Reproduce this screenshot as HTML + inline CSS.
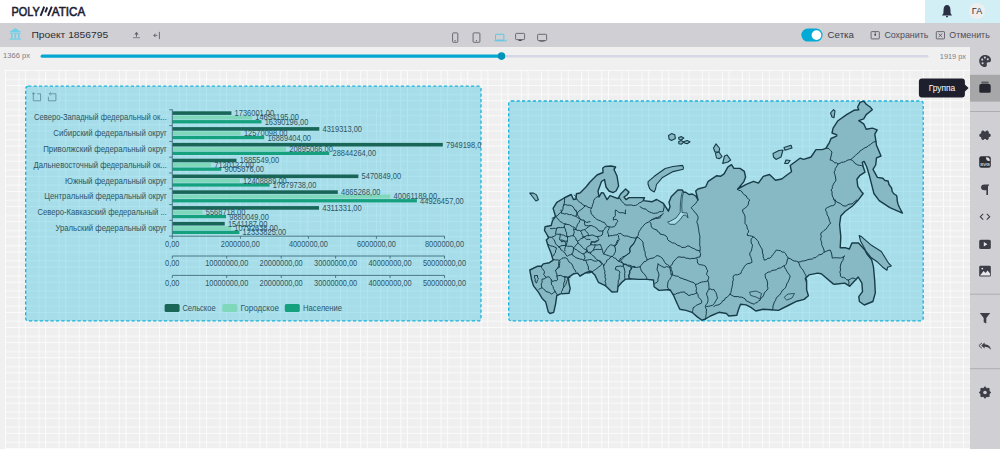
<!DOCTYPE html>
<html><head><meta charset="utf-8">
<style>
*{margin:0;padding:0}
html,body{width:1000px;height:449px;overflow:hidden;background:#f0f0f0}
svg{display:block;font-family:"Liberation Sans",sans-serif}
</style></head><body>
<svg width="1000" height="449" viewBox="0 0 1000 449">
<defs>
<pattern id="grid" patternUnits="userSpaceOnUse" x="5" y="70" width="20.1" height="15.12">
<rect x="0" y="0" width="20.1" height="15.12" fill="#efeff0"/>
<rect x="0" y="0" width="1" height="15.12" fill="#fbfbfb"/>
<rect x="13.4" y="0" width="1" height="15.12" fill="#fbfbfb"/>
<rect x="0" y="0" width="20.1" height="1" fill="#fbfbfb"/>
<rect x="0" y="8.9" width="20.1" height="1" fill="#fbfbfb"/>
</pattern>
<clipPath id="cp"><rect x="25.7" y="86.2" width="455.3" height="234.7"/></clipPath>
</defs>

<rect x="0" y="47" width="970" height="402" fill="#f0f0f0"/>
<rect x="5" y="70" width="965" height="379" fill="url(#grid)"/>
<rect x="0" y="0" width="1000" height="23" fill="#ffffff"/>
<rect x="925" y="0" width="75" height="23" fill="#d3eff6"/>
<g fill="#1c2133" stroke="#1c2133" stroke-width="0.6" font-size="13.2">
<text x="11.6" y="15.8" textLength="28.2" lengthAdjust="spacingAndGlyphs">POLY</text>
<text x="51.8" y="15.8" textLength="33.4" lengthAdjust="spacingAndGlyphs">ATICA</text>
</g>
<g stroke="#1c2133" stroke-width="1.9" stroke-linecap="butt">
<line x1="40.6" y1="15.8" x2="44.2" y2="6.6"/>
<line x1="45.3" y1="12.4" x2="47.2" y2="7.4"/>
<line x1="48" y1="15.8" x2="51.8" y2="6.6"/>
</g>
<path d="M942,15.5 L943.4,13.2 L943.6,9.2 Q943.8,5.2 947,5 Q950.2,5.2 950.4,9.2 L950.6,13.2 L952,15.5 Z" fill="#2b3044"/>
<rect x="946" y="15.8" width="2" height="1.6" rx="0.8" fill="#2b3044"/>
<circle cx="977" cy="11" r="8" fill="#eeeeee"/>
<text x="977" y="14.3" font-size="9" fill="#2f3242" text-anchor="middle">ГА</text>
<rect x="0" y="23" width="1000" height="24" fill="#d0cfd4"/>
<g fill="#6fd0e8">
<path d="M9.3,32 L15.3,28 L21.2,32 Z"/>
<rect x="10" y="32.6" width="10.6" height="1.2"/>
<rect x="11" y="34" width="1.6" height="4.2"/><rect x="14.5" y="34" width="1.6" height="4.2"/><rect x="18" y="34" width="1.6" height="4.2"/>
<rect x="9.6" y="38.4" width="11.3" height="1.3"/>
</g>
<text x="31.4" y="38.0" font-size="9.8" fill="#2c2d38" textLength="76.8" lengthAdjust="spacingAndGlyphs">Проект 1856795</text>
<g fill="#64656e"><path d="M136.5,31.8 L134.3,34.4 L136.0,34.4 L136.0,36.8 L137.0,36.8 L137.0,34.4 L138.7,34.4 Z"/><rect x="133" y="37.4" width="7" height="0.75"/></g>
<g stroke="#5e5f68" stroke-width="0.9" fill="none"><path d="M157.3,35.4 L153.8,35.4 M155.6,33.6 L153.8,35.4 L155.6,37.2"/><line x1="159.4" y1="31.9" x2="159.4" y2="39.1"/></g>
<g stroke="#5e5f68" stroke-width="0.9" fill="none">
<rect x="452.6" y="32.9" width="5.2" height="9.4" rx="0.8"/>
<rect x="473.1" y="32.9" width="6.8" height="9.4" rx="0.8"/>
<rect x="515.6" y="33.4" width="9" height="6.2" rx="0.8"/>
<rect x="537.6" y="34.3" width="9" height="6.2" rx="0.8"/>
</g>
<rect x="454.3" y="40.4" width="1.6" height="0.8" fill="#5e5f68"/>
<circle cx="476.5" cy="40.6" r="0.6" fill="#5e5f68"/>
<rect x="518.5" y="39.8" width="3.2" height="1.2" fill="#4a4b55"/>
<rect x="539.5" y="40.6" width="5" height="1.2" fill="#6e6f78"/>
<g stroke="#4fc6e6" stroke-width="0.9" fill="none"><rect x="495.5" y="34.3" width="8.4" height="5.8" rx="0.6"/><path d="M494.5,40.8 L504.5,40.8"/><path d="M504.5,40.6 L505.5,41.4 L507,39.6"/></g>
<rect x="801.3" y="28.6" width="21.3" height="13" rx="6.5" fill="#04aad6"/>
<circle cx="816.5" cy="35.1" r="4.9" fill="#ffffff"/>
<text x="827.6" y="38.1" font-size="9.9" fill="#3b3c4a" textLength="26.4" lengthAdjust="spacingAndGlyphs">Сетка</text>
<g stroke="#5e5f68" stroke-width="0.9" fill="none"><rect x="871.1" y="31.6" width="8.2" height="7.3" rx="0.6"/></g>
<circle cx="875.2" cy="34.8" r="0.9" fill="#2e2f38"/><rect x="874.8" y="31.6" width="0.8" height="3" fill="#5e5f68"/>
<text x="884.4" y="38.2" font-size="9.2" fill="#4d4e5b" textLength="43.9" lengthAdjust="spacingAndGlyphs">Сохранить</text>
<g stroke="#5e5f68" stroke-width="0.9" fill="none"><rect x="936.3" y="31.6" width="8.2" height="7.3" rx="0.6"/><path d="M938.6,33.6 L942.2,37 M942.2,33.6 L938.6,37"/></g>
<text x="949.3" y="38.2" font-size="9.2" fill="#4d4e5b" textLength="40.5" lengthAdjust="spacingAndGlyphs">Отменить</text>
<text x="3" y="58" font-size="7.7" fill="#7c7c86" textLength="27" lengthAdjust="spacingAndGlyphs">1366 px</text>
<text x="939.8" y="58.6" font-size="7.6" fill="#7c7c86" textLength="26.2" lengthAdjust="spacingAndGlyphs">1919 px</text>
<rect x="501" y="55" width="427.5" height="2.4" rx="1.2" fill="#d5d7e5"/>
<rect x="40.6" y="54.6" width="461" height="3.2" rx="1.6" fill="#04a6d2"/>
<circle cx="501.5" cy="56.1" r="3.8" fill="#0394b8"/>
<rect x="970" y="47" width="30" height="402" fill="#d0cfd4"/>
<rect x="970" y="74.8" width="30" height="26.8" fill="#a7a7aa"/>
<rect x="970" y="111.0" width="30" height="1" fill="#aeaeb2"/>
<rect x="970" y="293.7" width="30" height="1" fill="#aeaeb2"/>
<rect x="970" y="368.2" width="30" height="1" fill="#aeaeb2"/>
<rect x="25.7" y="86.2" width="455.3" height="234.7" rx="2.5" fill="rgba(0,178,216,0.3)" stroke="#19b1d9" stroke-width="1.3" stroke-dasharray="3.2 2.2"/>
<rect x="508.7" y="101.0" width="414.50000000000006" height="219.89999999999998" rx="2.5" fill="rgba(0,178,216,0.3)" stroke="#19b1d9" stroke-width="1.3" stroke-dasharray="3.2 2.2"/>
<g stroke="#5f8e9c" stroke-width="0.9" fill="none">
<path d="M33.3,92.3 L33.3,100.8 L40.6,100.8 L40.6,93.8 L37.2,93.8 M32.1,93.7 L35.2,93.7"/>
<path d="M55.9,93.8 L55.9,100.8 L48.4,100.8 L48.4,96.8 M55.9,93.8 L49.6,93.8 M50.8,92.3 L49.2,93.8 L50.8,95.5"/>
</g>
<g clip-path="url(#cp)">
<g stroke="#b4e4ee" stroke-width="0.8">
<line x1="240.4" y1="109.8" x2="240.4" y2="236.2"/>
<line x1="308.4" y1="109.8" x2="308.4" y2="236.2"/>
<line x1="376.4" y1="109.8" x2="376.4" y2="236.2"/>
<line x1="444.5" y1="109.8" x2="444.5" y2="236.2"/>
<line x1="226.7" y1="109.8" x2="226.7" y2="236.2"/>
<line x1="281.2" y1="109.8" x2="281.2" y2="236.2"/>
<line x1="335.6" y1="109.8" x2="335.6" y2="236.2"/>
<line x1="390.1" y1="109.8" x2="390.1" y2="236.2"/>
</g>
<rect x="172.3" y="111.30" width="59.1" height="3.6" fill="#196658"/>
<rect x="172.3" y="115.60" width="79.8" height="3.8" fill="#80d8ba"/>
<rect x="172.3" y="120.10" width="89.2" height="3.3" fill="#16a17e"/>
<text x="33.9" y="120.4" font-size="8.5" fill="#2e5564" textLength="132.9" lengthAdjust="spacingAndGlyphs">Северо-Западный федеральный ок...</text>
<rect x="172.3" y="127.10" width="147.0" height="3.6" fill="#196658"/>
<rect x="172.3" y="131.40" width="68.4" height="3.8" fill="#80d8ba"/>
<rect x="172.3" y="135.90" width="91.9" height="3.3" fill="#16a17e"/>
<text x="53.3" y="136.2" font-size="8.5" fill="#2e5564" textLength="113.5" lengthAdjust="spacingAndGlyphs">Сибирский федеральный округ</text>
<rect x="172.3" y="142.90" width="270.5" height="3.6" fill="#196658"/>
<rect x="172.3" y="147.20" width="113.8" height="3.8" fill="#80d8ba"/>
<rect x="172.3" y="151.70" width="157.0" height="3.3" fill="#16a17e"/>
<text x="43.2" y="152.0" font-size="8.5" fill="#2e5564" textLength="123.6" lengthAdjust="spacingAndGlyphs">Приволжский федеральный округ</text>
<rect x="172.3" y="158.70" width="64.2" height="3.6" fill="#196658"/>
<rect x="172.3" y="163.00" width="38.8" height="3.8" fill="#80d8ba"/>
<rect x="172.3" y="167.50" width="49.0" height="3.3" fill="#16a17e"/>
<text x="33.6" y="167.8" font-size="8.5" fill="#2e5564" textLength="133.2" lengthAdjust="spacingAndGlyphs">Дальневосточный федеральный ок...</text>
<rect x="172.3" y="174.50" width="186.1" height="3.6" fill="#196658"/>
<rect x="172.3" y="178.80" width="67.6" height="3.8" fill="#80d8ba"/>
<rect x="172.3" y="183.30" width="97.3" height="3.3" fill="#16a17e"/>
<text x="65.0" y="183.6" font-size="8.5" fill="#2e5564" textLength="101.8" lengthAdjust="spacingAndGlyphs">Южный федеральный округ</text>
<rect x="172.3" y="190.30" width="165.5" height="3.6" fill="#196658"/>
<rect x="172.3" y="194.60" width="218.1" height="3.8" fill="#80d8ba"/>
<rect x="172.3" y="199.10" width="244.6" height="3.3" fill="#16a17e"/>
<text x="44.3" y="199.4" font-size="8.5" fill="#2e5564" textLength="122.5" lengthAdjust="spacingAndGlyphs">Центральный федеральный округ</text>
<rect x="172.3" y="206.10" width="146.7" height="3.6" fill="#196658"/>
<rect x="172.3" y="210.40" width="30.3" height="3.8" fill="#80d8ba"/>
<rect x="172.3" y="214.90" width="53.8" height="3.3" fill="#16a17e"/>
<text x="37.5" y="215.2" font-size="8.5" fill="#2e5564" textLength="129.3" lengthAdjust="spacingAndGlyphs">Северо-Кавказский федеральный ...</text>
<rect x="172.3" y="221.90" width="52.4" height="3.6" fill="#196658"/>
<rect x="172.3" y="226.20" width="58.8" height="3.8" fill="#80d8ba"/>
<rect x="172.3" y="230.70" width="67.1" height="3.3" fill="#16a17e"/>
<text x="55.4" y="231.0" font-size="8.5" fill="#2e5564" textLength="111.4" lengthAdjust="spacingAndGlyphs">Уральский федеральный округ</text>
<text x="234.6" y="116.0" font-size="8.4" fill="#2e5564" textLength="39.5" lengthAdjust="spacingAndGlyphs">1736001,00</text>
<text x="255.3" y="120.4" font-size="8.4" fill="#2e5564" textLength="43.6" lengthAdjust="spacingAndGlyphs">14654195,00</text>
<text x="264.7" y="124.7" font-size="8.4" fill="#2e5564" textLength="43.6" lengthAdjust="spacingAndGlyphs">16390196,00</text>
<text x="322.5" y="131.8" font-size="8.4" fill="#2e5564" textLength="39.5" lengthAdjust="spacingAndGlyphs">4319313,00</text>
<text x="243.9" y="136.2" font-size="8.4" fill="#2e5564" textLength="43.6" lengthAdjust="spacingAndGlyphs">12570098,00</text>
<text x="267.4" y="140.5" font-size="8.4" fill="#2e5564" textLength="43.6" lengthAdjust="spacingAndGlyphs">16889404,00</text>
<text x="446.0" y="147.6" font-size="8.4" fill="#2e5564" textLength="39.5" lengthAdjust="spacingAndGlyphs">7949198,00</text>
<text x="289.3" y="152.0" font-size="8.4" fill="#2e5564" textLength="43.6" lengthAdjust="spacingAndGlyphs">20895066,00</text>
<text x="332.5" y="156.3" font-size="8.4" fill="#2e5564" textLength="43.6" lengthAdjust="spacingAndGlyphs">28844264,00</text>
<text x="239.7" y="163.4" font-size="8.4" fill="#2e5564" textLength="39.5" lengthAdjust="spacingAndGlyphs">1885549,00</text>
<text x="214.3" y="167.8" font-size="8.4" fill="#2e5564" textLength="39.5" lengthAdjust="spacingAndGlyphs">7120127,00</text>
<text x="224.5" y="172.1" font-size="8.4" fill="#2e5564" textLength="39.5" lengthAdjust="spacingAndGlyphs">9005676,00</text>
<text x="361.6" y="179.2" font-size="8.4" fill="#2e5564" textLength="39.5" lengthAdjust="spacingAndGlyphs">5470849,00</text>
<text x="243.1" y="183.6" font-size="8.4" fill="#2e5564" textLength="43.6" lengthAdjust="spacingAndGlyphs">12408889,00</text>
<text x="272.8" y="187.9" font-size="8.4" fill="#2e5564" textLength="43.6" lengthAdjust="spacingAndGlyphs">17879738,00</text>
<text x="341.0" y="195.0" font-size="8.4" fill="#2e5564" textLength="39.5" lengthAdjust="spacingAndGlyphs">4865268,00</text>
<text x="393.6" y="199.4" font-size="8.4" fill="#2e5564" textLength="43.6" lengthAdjust="spacingAndGlyphs">40061189,00</text>
<text x="420.1" y="203.7" font-size="8.4" fill="#2e5564" textLength="43.6" lengthAdjust="spacingAndGlyphs">44926457,00</text>
<text x="322.2" y="210.8" font-size="8.4" fill="#2e5564" textLength="39.5" lengthAdjust="spacingAndGlyphs">4311331,00</text>
<text x="205.8" y="215.2" font-size="8.4" fill="#2e5564" textLength="39.5" lengthAdjust="spacingAndGlyphs">5568718,00</text>
<text x="229.3" y="219.5" font-size="8.4" fill="#2e5564" textLength="39.5" lengthAdjust="spacingAndGlyphs">9880049,00</text>
<text x="227.9" y="226.6" font-size="8.4" fill="#2e5564" textLength="39.5" lengthAdjust="spacingAndGlyphs">1541187,00</text>
<text x="234.3" y="231.0" font-size="8.4" fill="#2e5564" textLength="43.6" lengthAdjust="spacingAndGlyphs">10792638,00</text>
<text x="242.6" y="235.3" font-size="8.4" fill="#2e5564" textLength="43.6" lengthAdjust="spacingAndGlyphs">12333825,00</text>
</g>
<g stroke="#3f6d7b" stroke-width="0.9" fill="none">
<line x1="172.3" y1="109.3" x2="172.3" y2="236.6"/>
<line x1="169.2" y1="109.8" x2="172.3" y2="109.8"/>
<line x1="169.2" y1="125.6" x2="172.3" y2="125.6"/>
<line x1="169.2" y1="141.4" x2="172.3" y2="141.4"/>
<line x1="169.2" y1="157.2" x2="172.3" y2="157.2"/>
<line x1="169.2" y1="173.0" x2="172.3" y2="173.0"/>
<line x1="169.2" y1="188.8" x2="172.3" y2="188.8"/>
<line x1="169.2" y1="204.6" x2="172.3" y2="204.6"/>
<line x1="169.2" y1="220.4" x2="172.3" y2="220.4"/>
<line x1="169.2" y1="236.2" x2="172.3" y2="236.2"/>
<line x1="172.3" y1="236.2" x2="444.6" y2="236.2"/>
<line x1="172.3" y1="256.0" x2="444.6" y2="256.0"/>
<line x1="172.3" y1="275.4" x2="444.6" y2="275.4"/>
<line x1="172.3" y1="236.2" x2="172.3" y2="238.8"/>
<line x1="240.4" y1="236.2" x2="240.4" y2="238.8"/>
<line x1="308.4" y1="236.2" x2="308.4" y2="238.8"/>
<line x1="376.4" y1="236.2" x2="376.4" y2="238.8"/>
<line x1="444.5" y1="236.2" x2="444.5" y2="238.8"/>
<line x1="172.3" y1="256.0" x2="172.3" y2="258.6"/>
<line x1="226.7" y1="256.0" x2="226.7" y2="258.6"/>
<line x1="281.2" y1="256.0" x2="281.2" y2="258.6"/>
<line x1="335.6" y1="256.0" x2="335.6" y2="258.6"/>
<line x1="390.1" y1="256.0" x2="390.1" y2="258.6"/>
<line x1="444.5" y1="256.0" x2="444.5" y2="258.6"/>
<line x1="172.3" y1="275.4" x2="172.3" y2="278.0"/>
<line x1="226.7" y1="275.4" x2="226.7" y2="278.0"/>
<line x1="281.2" y1="275.4" x2="281.2" y2="278.0"/>
<line x1="335.6" y1="275.4" x2="335.6" y2="278.0"/>
<line x1="390.1" y1="275.4" x2="390.1" y2="278.0"/>
<line x1="444.5" y1="275.4" x2="444.5" y2="278.0"/>
</g>
<text x="165.1" y="246.8" font-size="8.3" fill="#2e5564" textLength="14.4" lengthAdjust="spacingAndGlyphs">0,00</text>
<text x="220.8" y="246.8" font-size="8.3" fill="#2e5564" textLength="39.0" lengthAdjust="spacingAndGlyphs">2000000,00</text>
<text x="288.9" y="246.8" font-size="8.3" fill="#2e5564" textLength="39.0" lengthAdjust="spacingAndGlyphs">4000000,00</text>
<text x="356.9" y="246.8" font-size="8.3" fill="#2e5564" textLength="39.0" lengthAdjust="spacingAndGlyphs">6000000,00</text>
<text x="425.0" y="246.8" font-size="8.3" fill="#2e5564" textLength="39.0" lengthAdjust="spacingAndGlyphs">8000000,00</text>
<text x="165.1" y="266.0" font-size="8.3" fill="#2e5564" textLength="14.4" lengthAdjust="spacingAndGlyphs">0,00</text>
<text x="205.2" y="266.0" font-size="8.3" fill="#2e5564" textLength="43.1" lengthAdjust="spacingAndGlyphs">10000000,00</text>
<text x="259.6" y="266.0" font-size="8.3" fill="#2e5564" textLength="43.1" lengthAdjust="spacingAndGlyphs">20000000,00</text>
<text x="314.1" y="266.0" font-size="8.3" fill="#2e5564" textLength="43.1" lengthAdjust="spacingAndGlyphs">30000000,00</text>
<text x="368.5" y="266.0" font-size="8.3" fill="#2e5564" textLength="43.1" lengthAdjust="spacingAndGlyphs">40000000,00</text>
<text x="422.9" y="266.0" font-size="8.3" fill="#2e5564" textLength="43.1" lengthAdjust="spacingAndGlyphs">50000000,00</text>
<text x="165.1" y="285.7" font-size="8.3" fill="#2e5564" textLength="14.4" lengthAdjust="spacingAndGlyphs">0,00</text>
<text x="205.2" y="285.7" font-size="8.3" fill="#2e5564" textLength="43.1" lengthAdjust="spacingAndGlyphs">10000000,00</text>
<text x="259.6" y="285.7" font-size="8.3" fill="#2e5564" textLength="43.1" lengthAdjust="spacingAndGlyphs">20000000,00</text>
<text x="314.1" y="285.7" font-size="8.3" fill="#2e5564" textLength="43.1" lengthAdjust="spacingAndGlyphs">30000000,00</text>
<text x="368.5" y="285.7" font-size="8.3" fill="#2e5564" textLength="43.1" lengthAdjust="spacingAndGlyphs">40000000,00</text>
<text x="422.9" y="285.7" font-size="8.3" fill="#2e5564" textLength="43.1" lengthAdjust="spacingAndGlyphs">50000000,00</text>
<rect x="164.6" y="304" width="15" height="8" rx="1.6" fill="#196658"/>
<text x="182.4" y="311" font-size="8.5" fill="#2e5564" textLength="33.2" lengthAdjust="spacingAndGlyphs">Сельское</text>
<rect x="222.3" y="304" width="15" height="8" rx="1.6" fill="#80d8ba"/>
<text x="240.4" y="311" font-size="8.5" fill="#2e5564" textLength="38.6" lengthAdjust="spacingAndGlyphs">Городское</text>
<rect x="284.8" y="304" width="15" height="8" rx="1.6" fill="#16a17e"/>
<text x="303.1" y="311" font-size="8.5" fill="#2e5564" textLength="39" lengthAdjust="spacingAndGlyphs">Население</text>
<g stroke="#173c48" stroke-linejoin="round" stroke-linecap="round">
<polygon points="571.2,194.5 573.5,199.5 576.0,199.0 576.4,193.7 580.0,193.0 586.0,187.0 590.0,182.0 597.0,175.0 603.0,172.5 602.8,168.0 605.0,166.5 611.0,166.0 615.6,167.0 614.0,169.5 617.0,176.0 618.6,186.0 616.0,191.0 613.0,192.6 609.0,191.0 606.0,187.0 604.5,179.5 601.5,181.5 598.0,191.0 599.0,197.0 601.5,192.6 603.5,193.0 607.0,199.6 610.0,195.6 618.0,198.6 620.6,194.0 625.6,189.0 629.0,192.0 627.0,195.0 624.0,197.0 626.0,199.6 629.0,197.6 640.0,197.6 644.5,197.8 643.3,200.6 652.2,201.7 656.7,199.5 663.4,203.4 668.4,211.2 670.0,206.7 669.0,202.3 671.2,196.7 677.9,190.0 682.3,190.0 683.4,192.2 685.7,192.2 689.0,194.5 692.3,194.0 695.7,196.0 698.0,200.0 695.7,191.0 698.0,189.0 705.7,186.8 708.2,181.3 716.8,175.7 720.4,176.3 724.1,173.9 727.8,167.2 731.5,164.7 733.9,168.4 740.0,168.4 744.3,171.4 745.6,177.0 743.7,181.9 737.6,189.2 746.2,184.3 753.5,181.3 758.4,183.1 763.3,176.3 769.5,174.5 775.5,180.2 781.7,179.0 786.6,175.3 791.5,171.7 790.2,165.5 800.0,158.2 803.7,159.4 811.0,157.0 816.0,149.6 822.1,149.6 825.8,148.4 829.5,142.3 831.0,138.5 836.5,136.2 836.8,134.8 832.0,133.0 833.1,128.1 838.0,120.7 846.6,114.6 853.9,110.3 858.8,109.7 857.6,107.3 860.0,102.4 863.7,101.1 866.2,104.2 870.5,107.3 872.3,109.7 866.2,114.6 863.7,118.9 858.8,120.7 863.7,123.8 866.2,129.3 872.3,128.1 877.2,129.9 874.8,134.2 876.0,141.6 876.4,145.0 881.0,156.0 876.5,157.8 875.7,165.0 873.0,169.4 877.4,177.4 882.8,178.3 885.0,180.5 888.1,181.0 889.0,184.5 891.7,188.1 892.0,191.0 893.5,193.5 896.5,195.5 897.0,197.0 897.2,200.5 898.0,204.2 899.5,207.5 902.4,213.1 889.9,207.7 879.2,200.6 873.9,193.5 872.1,186.3 869.4,175.7 866.7,166.7 864.1,161.4 862.3,162.3 863.2,166.7 865.0,172.1 859.6,175.7 856.9,179.2 857.8,186.3 861.4,191.7 863.2,193.5 857.8,200.6 852.5,206.0 845.3,211.3 840.8,215.9 839.6,224.5 840.8,236.8 840.2,247.8 845.7,247.8 849.4,249.0 851.9,242.9 858.5,243.0 864.9,250.0 866.8,253.7 871.7,259.8 873.5,267.2 874.7,280.6 875.3,292.9 872.9,301.5 864.3,305.0 859.4,301.5 858.8,296.6 862.5,291.7 861.9,283.1 858.2,277.0 849.6,286.2 844.7,283.1 834.9,284.3 833.5,284.1 821.3,273.7 817.6,273.1 809.0,274.9 805.3,278.6 806.6,282.3 806.6,289.6 808.4,295.7 804.1,299.4 796.8,301.2 788.2,305.5 778.4,310.4 771.0,309.8 763.1,309.2 755.8,311.0 750.9,307.4 746.0,304.9 740.5,304.3 738.6,309.2 736.8,315.3 728.8,316.0 726.4,313.5 719.0,312.3 710.4,316.0 705.5,319.0 701.9,320.2 697.0,316.6 692.0,312.3 686.0,310.4 679.8,309.2 677.4,304.3 673.7,295.7 670.0,289.6 667.6,289.8 659.0,290.4 654.1,286.8 653.5,280.0 646.8,279.4 638.2,279.4 629.6,278.8 625.3,279.4 621.6,282.5 618.0,286.8 617.4,291.7 612.0,292.0 605.8,285.9 598.4,282.3 594.8,274.9 591.0,271.2 586.2,272.5 580.0,276.1 577.6,273.1 573.9,273.7 568.4,277.4 569.0,283.5 570.2,288.4 569.0,293.3 560.4,293.9 556.8,295.7 555.5,304.3 553.7,312.3 550.0,313.5 548.2,311.7 545.7,301.9 542.0,298.2 538.4,292.1 533.5,285.9 531.6,279.8 529.8,270.0 537.2,266.3 541.4,266.3 543.3,263.9 549.4,262.7 553.1,260.2 551.2,253.5 548.2,246.1 546.3,240.0 548.8,237.8 546.3,233.5 544.5,230.4 545.1,226.8 551.2,225.5 552.5,220.6 555.5,216.3 553.1,208.4 556.8,202.3 564.1,198.0" fill="#86b9c4" stroke-width="1.4"/>
<polygon points="529.8,193.1 533.5,193.1 536.5,194.9 538.4,199.8 535.9,201.0 531.6,195.5" fill="#86b9c4" stroke-width="1.1"/>
<polygon points="648.1,181.7 654.3,176.3 665.2,168.5 673.0,166.5 682.4,165.4 683.4,167.0 683.2,169.3 673.0,171.6 662.1,177.8 656.5,184.5 655.5,189.0 654.3,191.9 651.5,190.5 649.7,188.7 648.0,184.0" fill="#86b9c4" stroke-width="1.1"/>
<polygon points="668.6,135.5 671.5,133.6 674.8,134.8 675.4,138.5 671.5,140.4 669.0,139.0" fill="#86b9c4" stroke-width="1.1"/>
<polygon points="678.6,137.5 681.5,136.6 683.8,138.0 681.5,139.8 679.0,139.5" fill="#86b9c4" stroke-width="1.1"/>
<polygon points="678.6,141.8 681.0,140.6 683.8,142.0 681.5,144.2 679.0,143.8" fill="#86b9c4" stroke-width="1.1"/>
<polygon points="684.2,141.6 687.0,140.6 690.0,141.8 687.5,143.6 685.0,143.2" fill="#86b9c4" stroke-width="1.1"/>
<polygon points="713.5,148.0 716.0,143.9 719.7,148.5 719.0,152.0 715.0,152.0" fill="#86b9c4" stroke-width="1.1"/>
<polygon points="715.4,153.0 719.0,152.0 722.0,156.5 719.5,158.6 716.5,158.0" fill="#86b9c4" stroke-width="1.1"/>
<polygon points="722.7,163.5 724.5,156.0 727.0,154.9 730.7,160.0 728.0,162.0" fill="#86b9c4" stroke-width="1.1"/>
<polygon points="773.0,153.5 779.0,150.5 783.0,150.0 781.0,157.0 776.0,159.4 773.5,157.0" fill="#86b9c4" stroke-width="1.1"/>
<polygon points="784.0,147.5 791.0,145.3 792.0,148.0 785.0,150.2" fill="#86b9c4" stroke-width="1.1"/>
<polygon points="784.7,163.5 786.0,160.0 790.2,160.5 788.0,163.5" fill="#86b9c4" stroke-width="1.1"/>
<polygon points="830.5,113.0 833.5,109.7 835.0,111.0 834.0,117.7 832.0,117.0" fill="#86b9c4" stroke-width="1.1"/>
<polygon points="859.2,235.5 861.7,236.8 871.5,245.3 881.3,251.5 888.8,263.5 891.3,265.9 887.6,267.2 887.0,270.2 882.7,267.2 877.8,262.3 871.0,257.5 866.0,251.0 860.5,241.0" fill="#86b9c4" stroke-width="1.1"/>
<polygon points="784.5,297.0 788.0,294.0 794.5,293.5 792.0,298.0 787.0,300.0" fill="#86b9c4" stroke-width="0.8"/>
<polygon points="682.6,190.8 681.2,197.0 680.4,204.0 680.2,212.5 676.0,218.0 670.0,221.3 667.6,222.2 670.0,224.3 675.0,224.3 680.0,219.8 683.0,215.5 685.5,214.8 688.0,218.0 687.0,213.0 682.0,212.6 681.7,205.0 682.3,197.0 683.6,192.0" fill="#a9dce8" stroke-width="0.8"/>
<polygon points="750.0,292.0 756.0,291.0 761.5,293.5 760.0,299.0 756.0,297.0 751.0,295.5" fill="#86b9c4" stroke-width="0.8"/>
<polyline points="564.6,198.7 564.5,200.8 564.4,202.9 563.7,204.9 563.0,207.0 563.0,209.2 562.0,211.2 560.4,212.5 558.9,214.0 557.6,215.5 555.7,216.5 553.9,217.4 552.1,218.3" fill="none" stroke-width="1.0"/>
<polyline points="563.7,204.9 565.8,204.6 567.7,205.3 569.8,205.1 571.7,205.8 573.2,206.9 574.0,208.4 574.8,210.1 576.2,211.2 577.1,212.8 577.1,214.7" fill="none" stroke-width="1.0"/>
<polyline points="574.4,195.1 575.7,196.5 576.5,198.3 577.3,200.1 578.8,201.4 580.3,202.6 582.0,203.5 583.2,205.1 585.1,205.8 586.8,206.0 588.0,207.5 589.8,207.6 591.3,208.5" fill="none" stroke-width="1.0"/>
<polyline points="585.1,205.8 583.8,207.4 582.2,208.8 580.5,210.0 578.8,211.2 577.6,212.8 577.1,214.7 578.5,216.1 579.4,217.9 580.6,219.4" fill="none" stroke-width="1.0"/>
<polyline points="591.3,208.5 592.2,206.6 592.6,204.5 593.5,202.6 593.7,200.5 594.9,198.7 596.4,197.2 598.4,196.5" fill="none" stroke-width="1.0"/>
<polyline points="620.2,198.8 618.9,197.8 620.4,199.0 621.2,200.8 622.6,202.0 623.9,203.3 625.0,204.9 627.1,205.1 629.2,205.0 631.4,205.0 633.5,205.6 635.6,205.4 637.5,204.5 639.1,203.0 641.1,202.2 642.9,201.0" fill="none" stroke-width="1.0"/>
<polyline points="555.6,216.2 556.6,217.3 557.4,218.6 558.7,219.4 559.3,220.7 560.3,221.7 562.0,222.3 563.2,223.7 565.0,224.0 565.7,224.0" fill="none" stroke-width="1.0"/>
<polyline points="561.0,210.0 561.4,211.6 561.0,213.1 562.8,213.3 564.5,214.0 566.4,213.6 568.1,214.3 569.7,214.7 571.4,214.6 572.8,215.5 574.3,216.0 575.9,216.2 577.3,217.5 579.0,218.4 580.6,219.4 582.1,220.2 583.7,220.1 585.2,221.7 586.8,222.5 588.4,221.9 590.0,221.7" fill="none" stroke-width="1.0"/>
<polyline points="575.9,210.0 576.5,211.6 577.4,213.1 576.6,214.6 575.9,216.2" fill="none" stroke-width="1.0"/>
<polyline points="565.0,224.0 566.5,224.4 568.1,224.5 569.6,224.8 571.0,225.9 572.5,226.8 574.3,227.2 575.1,228.3 575.9,229.5" fill="none" stroke-width="1.0"/>
<polyline points="580.6,219.4 579.6,220.6 579.4,222.3 578.2,223.3 577.4,224.8 576.9,226.3 576.0,227.8 575.9,229.5" fill="none" stroke-width="1.0"/>
<polyline points="565.7,224.0 564.6,225.4 564.2,227.2 562.5,227.6 560.7,227.7 558.9,227.5 557.2,227.9 555.6,228.6 553.9,228.2 552.2,228.7 550.5,228.5" fill="none" stroke-width="1.0"/>
<polyline points="564.2,227.2 565.3,229.0 565.7,231.1 566.7,232.8 566.5,234.8 567.3,236.5 565.2,236.1 563.4,235.0 561.8,234.9 560.3,234.2 559.1,234.3 557.9,234.2 556.6,234.2 555.6,235.0 554.5,236.2 553.0,236.6 551.7,237.3 549.9,237.1 548.0,237.0" fill="none" stroke-width="1.0"/>
<polyline points="557.2,227.9 556.3,229.9 555.8,232.0 555.6,234.2" fill="none" stroke-width="1.0"/>
<polyline points="567.3,236.5 569.4,236.6 571.4,235.7 573.5,235.7 573.8,233.7 574.3,231.8 573.7,230.3 573.5,228.7 574.6,229.5 575.9,229.5" fill="none" stroke-width="1.0"/>
<polyline points="575.9,229.5 577.3,230.5 579.2,230.2 580.6,231.1 582.0,230.2 583.6,229.8 585.2,229.5 586.6,228.0 588.4,226.9 590.0,225.6 592.0,225.6 593.3,226.5 594.7,226.9 595.9,227.9 597.3,228.6 598.0,230.0 599.0,231.1 601.0,231.0 602.9,231.1 603.8,229.8 604.9,228.8 605.3,227.2 606.5,227.0 607.6,226.4 609.5,226.8 611.5,227.2 613.1,226.9 614.6,226.4 615.8,224.9 616.3,223.0 617.8,221.7 617.4,220.3 616.2,219.4 614.6,219.4 613.1,220.1 613.5,218.9 613.1,217.8 614.5,216.9 615.4,215.5 615.3,213.7 615.3,211.8 615.4,210.0 617.2,210.8 618.5,212.3 620.2,212.8 622.2,212.6 623.9,213.0 625.6,213.9 625.3,211.9 625.6,210.0" fill="none" stroke-width="1.0"/>
<polyline points="580.6,231.1 581.5,232.5 581.9,234.1 582.8,235.6 582.9,237.3 584.5,237.6 585.7,238.5 586.8,239.6 588.4,239.2 590.0,239.6" fill="none" stroke-width="1.0"/>
<polyline points="573.5,235.7 574.6,237.0 575.9,238.1 576.1,240.1 577.4,241.2 579.3,240.2 580.9,238.7 582.9,238.0" fill="none" stroke-width="1.0"/>
<polyline points="567.3,236.5 567.6,238.1 567.5,239.6 567.3,241.2 566.9,242.7 566.6,244.2 565.7,245.5 565.7,243.5 565.0,241.6 563.2,240.3 561.0,240.0" fill="none" stroke-width="1.0"/>
<polyline points="560.3,234.2 560.1,236.0 559.8,237.8 559.5,239.6 561.0,240.5 561.8,242.0 563.7,241.2 565.7,241.2 567.3,241.2" fill="none" stroke-width="1.0"/>
<polyline points="551.7,237.3 552.9,238.5 554.0,239.7 554.8,241.2 555.3,243.1 556.4,244.7 557.8,245.6 558.7,247.0 560.2,247.8 560.7,249.7 562.2,250.5 563.4,251.7 565.0,253.0 566.0,254.9 567.3,256.4 568.6,255.1 570.4,254.8 572.0,254.0 573.0,252.1 573.4,250.0 573.5,247.8 574.8,246.8 575.7,245.3 576.9,244.2 578.2,243.1 577.4,241.2" fill="none" stroke-width="1.0"/>
<polyline points="583.7,220.1 584.6,221.8 584.4,223.8 585.2,225.6 586.8,225.6 588.4,225.9 590.0,225.6" fill="none" stroke-width="1.0"/>
<polyline points="590.5,210.0 591.0,211.9 591.2,213.9 592.7,215.0 593.6,216.7 595.1,217.8 596.7,219.3 598.6,220.2 600.6,220.9 602.4,222.0 604.5,222.5 605.3,224.0 606.4,225.3 607.6,226.4" fill="none" stroke-width="1.0"/>
<polyline points="609.2,227.2 609.0,228.8 608.1,230.3 607.6,231.8 608.0,233.3 608.6,234.8 608.4,236.5 610.2,235.6 612.3,235.7 613.8,235.2 615.4,235.0 617.0,235.0 618.5,233.4 619.7,233.6 620.9,233.4 622.4,235.0 624.4,236.0 626.6,235.9 628.7,236.5 630.6,237.3 632.7,237.7 634.7,238.0 636.8,237.9" fill="none" stroke-width="1.0"/>
<polyline points="602.9,231.1 602.7,233.1 602.2,235.0 600.7,235.8 599.2,236.3 597.5,236.5 595.8,236.3 594.3,235.8 592.8,235.0 590.8,235.2 588.9,235.7 586.9,235.7 585.0,236.5 583.8,236.6 582.9,237.3" fill="none" stroke-width="1.0"/>
<polyline points="585.0,230.3 586.6,231.8 588.1,233.4 588.3,234.6 588.9,235.7" fill="none" stroke-width="1.0"/>
<polyline points="597.5,236.5 598.0,238.2 599.0,239.6 597.7,240.8 595.9,241.0 594.4,242.0 592.7,242.0 591.2,242.8 590.5,244.7" fill="none" stroke-width="1.0"/>
<polyline points="618.5,235.7 618.6,237.7 619.3,239.6 618.0,241.3 617.3,243.2 616.2,245.0 614.6,246.2 615.1,244.5 616.5,243.2 616.8,241.5 617.8,240.0" fill="none" stroke-width="1.0"/>
<polyline points="547.8,243.9 549.2,245.0 550.7,245.9 552.5,246.2 554.5,246.9 556.4,247.8 556.2,249.4 555.4,250.9 555.6,252.5 554.4,253.6 553.8,255.3 552.5,256.4" fill="none" stroke-width="1.0"/>
<polyline points="558.7,247.0 560.3,246.2 562.0,245.6 563.9,245.4 565.7,245.5 567.5,246.2 569.3,246.3 571.2,246.2 572.6,246.7 573.5,247.8" fill="none" stroke-width="1.0"/>
<polyline points="565.7,246.2 565.1,247.7 564.7,249.3 565.0,250.9" fill="none" stroke-width="1.0"/>
<polyline points="553.3,259.5 555.3,259.9 557.5,259.9 559.5,260.3 560.8,259.5 561.9,258.4 563.4,257.9 565.5,257.8 567.3,258.7 568.1,260.3 569.0,262.0 570.6,263.0 572.0,264.2 572.9,266.2 573.5,268.3 575.0,270.0 575.9,272.0" fill="none" stroke-width="1.0"/>
<polyline points="559.5,260.3 558.8,262.0 558.6,263.8 558.7,265.7 557.9,267.4 556.9,269.0 555.6,270.4 555.3,270.6 556.5,269.4 557.7,268.3 559.2,267.5 559.6,265.7 559.5,263.8 560.0,262.0" fill="none" stroke-width="1.0"/>
<polyline points="555.6,270.4 556.1,272.2 556.9,274.0 556.9,276.0" fill="none" stroke-width="1.0"/>
<polyline points="573.5,247.8 574.6,249.1 576.3,249.6 577.7,250.7 579.0,251.7 580.5,252.5 581.9,253.6 583.7,254.0 585.2,252.4 586.8,250.9" fill="none" stroke-width="1.0"/>
<polyline points="572.0,254.0 572.7,255.4 574.1,256.1 575.1,257.2 577.0,258.0 579.0,258.7 580.6,259.3 582.3,259.3 583.7,260.3 585.8,260.3 586.4,261.8 586.8,263.4 587.7,265.2 588.5,267.0 588.2,269.1 589.5,270.8 589.7,272.8" fill="none" stroke-width="1.0"/>
<polyline points="583.7,254.0 584.5,255.9 585.2,257.9 584.2,259.0 583.7,260.3" fill="none" stroke-width="1.0"/>
<polyline points="578.2,243.1 579.5,244.5 581.1,245.7 582.3,247.2 583.7,248.6 585.2,249.4 586.8,250.1 587.3,251.7 586.0,252.2 585.0,253.3" fill="none" stroke-width="1.0"/>
<polyline points="598.3,240.0 597.0,241.5 595.1,242.3 593.2,241.9 591.2,241.6 591.1,243.2 590.5,244.7 589.4,245.9 587.7,246.5 586.6,247.8 586.9,249.8 587.3,251.7" fill="none" stroke-width="1.0"/>
<polyline points="590.5,244.7 592.0,244.8 593.6,245.0 595.1,244.7 596.9,245.2 598.8,244.6 600.6,244.7 601.0,246.3 601.7,247.8 602.2,249.4 602.7,250.9 603.0,252.5 603.7,254.0 605.3,254.5 606.8,255.1 608.4,255.6 609.6,256.0 610.7,256.4 612.3,256.4 613.7,255.1 614.5,253.4 615.4,251.7 615.5,249.8 615.3,248.0 614.6,246.2" fill="none" stroke-width="1.0"/>
<polyline points="595.1,244.7 594.9,246.6 594.0,248.3 593.6,250.1 592.1,251.0 591.2,252.5 589.7,252.1 588.1,252.5 586.8,250.9" fill="none" stroke-width="1.0"/>
<polyline points="593.6,250.1 595.5,249.5 597.5,249.3 599.4,249.5 601.4,249.4" fill="none" stroke-width="1.0"/>
<polyline points="588.1,252.5 589.9,253.1 591.4,254.3 592.8,255.6 594.4,256.6 595.3,258.3 596.7,259.5 598.5,260.6 600.6,261.1 601.3,262.9 603.0,264.0 603.7,265.7 603.8,267.6 604.2,269.4 605.0,271.2 604.6,273.2 605.3,275.0 604.9,277.2 605.8,279.3 605.1,281.6 605.8,283.7 605.8,285.9" fill="none" stroke-width="1.0"/>
<polyline points="603.7,265.7 604.7,263.9 606.2,262.4 606.8,260.3 608.6,259.4 610.0,257.9 610.9,256.8 612.3,256.4" fill="none" stroke-width="1.0"/>
<polyline points="603.7,254.0 604.7,252.2 605.8,250.4 606.8,248.6 608.0,247.2 609.2,245.8 610.7,244.7 612.7,245.3 614.6,246.2" fill="none" stroke-width="1.0"/>
<polyline points="612.3,256.4 613.7,257.8 615.7,258.3 616.9,260.0 618.5,261.1 620.4,262.1 622.4,262.7 624.0,264.2 626.0,264.8 627.8,265.9 629.8,266.5 631.8,267.3 633.3,266.4 635.0,266.5" fill="none" stroke-width="1.0"/>
<polyline points="618.5,261.1 620.2,260.6 621.4,259.4 622.9,258.6 624.0,257.2 625.1,255.9 626.6,255.0 627.8,253.9 629.5,253.3 630.0,251.5 629.7,249.6 630.2,247.8 631.0,245.9 632.3,244.5 633.9,243.1 634.9,241.4 635.5,239.4 636.8,237.9" fill="none" stroke-width="1.0"/>
<polyline points="624.0,264.2 623.5,265.6 622.4,266.5 620.3,266.0 618.3,266.4 616.2,266.5 615.6,268.0 615.4,269.6 617.2,270.0 618.8,270.8 620.1,272.0 619.5,273.4 619.3,275.0 619.2,277.0 619.3,279.0 618.2,280.8 618.3,282.9 617.9,284.8 618.0,286.8" fill="none" stroke-width="1.0"/>
<polyline points="631.8,267.3 631.4,269.4 629.9,271.0 629.9,273.3 628.7,275.0 628.8,277.0 629.6,278.8" fill="none" stroke-width="1.0"/>
<polyline points="585.8,260.3 587.6,260.0 589.4,259.6 591.2,259.5 592.8,260.4 594.4,261.1 596.4,261.2 598.3,260.3 600.0,261.7 601.4,263.4 601.4,264.7 600.6,265.7 598.8,266.9 597.1,268.3 595.4,269.6 593.5,270.7 591.8,272.0 589.7,272.8 588.1,273.1 586.6,273.0 585.0,272.8 583.5,274.1 581.5,274.8 580.0,276.1" fill="none" stroke-width="1.0"/>
<polyline points="541.3,267.5 542.5,268.7 543.4,270.1 544.4,271.4 544.3,273.0 543.6,274.5 544.9,275.9 545.9,277.6 544.2,278.9 542.0,279.2 542.0,280.8 542.1,282.3 541.3,283.8 541.4,285.8 542.0,287.7 540.4,288.5 538.9,289.3" fill="none" stroke-width="1.0"/>
<polyline points="545.9,277.6 547.4,276.9 549.1,276.8 550.3,278.3 551.4,279.9 551.9,281.0 553.0,281.5 554.4,280.6 556.2,280.8 557.6,279.9 557.2,278.0 556.9,276.0 558.8,275.6 560.8,275.3 562.6,276.4 564.7,276.8 566.5,277.0 568.3,277.3 570.1,277.6" fill="none" stroke-width="1.0"/>
<polyline points="551.4,279.9 551.2,281.5 551.4,283.1 551.7,285.0 553.1,286.4 553.4,288.4 554.3,290.0 555.3,291.6 555.9,293.0 556.9,294.1 557.6,295.5" fill="none" stroke-width="1.0"/>
<polyline points="542.0,287.7 543.4,288.9 544.9,290.0 545.9,291.6 547.9,292.0 549.8,292.8 551.4,294.0 552.8,293.4 553.9,292.2 555.3,291.6" fill="none" stroke-width="1.0"/>
<polyline points="564.7,276.8 564.9,278.9 564.8,280.9 563.8,282.9 563.7,284.9 563.9,287.0 562.9,288.4 562.5,290.2 561.5,291.6 561.5,292.4" fill="none" stroke-width="1.0"/>
<polyline points="564.7,276.8 566.3,276.9 567.8,277.6 567.5,279.5 566.8,281.3 566.2,283.1 565.8,284.6 564.7,285.7 563.9,287.0" fill="none" stroke-width="1.0"/>
<polyline points="534.5,276.0 536.0,275.5 537.5,275.5 537.5,277.4 538.5,279.0 537.4,280.1 537.1,281.6 536.5,283.0 535.5,282.2 535.0,281.0 535.3,279.3 534.5,277.7 534.5,276.0" fill="none" stroke-width="1.0"/>
<polyline points="698.0,200.0 696.8,201.7 695.7,203.5 694.0,204.8 692.6,206.3 691.2,207.8 692.3,209.3 693.7,210.6 694.6,212.3 696.2,213.4 697.1,215.1 698.0,216.7 698.0,218.7 697.3,220.5 696.8,222.4 697.7,224.1 698.1,226.0 698.3,227.9 698.8,229.7 698.8,231.6 699.3,233.4 699.6,235.2 700.0,237.0 699.7,238.9 699.8,240.9 699.8,242.8 699.6,244.7 700.1,246.6 700.2,248.6 700.0,250.5 699.6,252.0 700.7,253.5 700.4,255.0" fill="none" stroke-width="1.0"/>
<polyline points="640.0,206.7 641.8,207.9 643.8,208.8 646.0,209.1 647.5,210.9 649.4,211.9 651.4,212.6 653.4,213.4 655.5,213.2 657.5,212.9 659.3,211.7 661.4,211.7 663.4,211.2 663.6,209.1 664.2,207.1 664.0,205.0" fill="none" stroke-width="1.0"/>
<polyline points="663.4,213.4 662.0,214.7 660.8,216.2 660.0,217.9 657.9,218.3 655.7,218.5 653.6,219.2 651.5,219.9" fill="none" stroke-width="1.0"/>
<polyline points="671.0,267.3 671.1,269.2 671.9,270.9 672.5,272.7 672.3,274.6 671.7,276.3 670.6,277.7 669.9,279.4 668.6,280.7 667.8,282.7 667.7,284.8 667.4,286.9 668.5,288.8 669.8,290.5 668.7,290.0 667.6,289.8" fill="none" stroke-width="1.0"/>
<polyline points="672.3,274.6 674.2,275.5 676.2,276.1 678.4,276.3 680.0,277.9 682.1,278.3 684.0,279.3 686.0,279.8 688.0,280.6 689.9,281.4 691.9,282.0 694.0,282.8 695.5,284.4 697.6,284.0 699.5,282.9 701.5,282.1 703.6,281.7 705.8,281.6 707.8,280.7" fill="none" stroke-width="1.0"/>
<polyline points="696.8,258.7 697.5,260.3 697.3,262.0 698.0,263.6 699.7,264.7 701.7,264.8 703.5,265.3 705.3,266.0 706.2,267.6 706.8,269.4 707.8,270.9 706.9,272.7 706.6,274.6 707.7,275.9 709.0,277.1 708.3,278.9 707.8,280.7 708.6,282.8 708.8,284.9 709.0,287.1 709.0,289.3 708.0,290.4 707.6,291.9 706.6,293.0 706.8,295.2 707.7,297.2 708.0,299.4 707.8,301.6 707.2,303.3 706.0,304.8 705.3,306.5 705.8,308.3 706.6,310.0 706.2,311.8 706.4,313.6 705.9,315.4 705.8,317.2 705.5,319.0" fill="none" stroke-width="1.0"/>
<polyline points="695.5,284.4 695.9,286.5 696.6,288.6 696.0,290.9 696.8,293.0 698.0,294.4 698.1,296.3 699.1,297.8 700.4,299.1 701.6,300.8 701.7,302.8 700.0,303.8 698.1,304.5 696.3,305.3 694.8,306.8 693.1,307.7 693.0,309.3 692.7,310.8 692.0,312.3" fill="none" stroke-width="1.0"/>
<polyline points="673.5,294.2 675.4,294.3 677.1,293.1 679.0,293.1 680.7,292.2 682.7,292.2 684.5,291.8 685.4,293.4 687.2,293.9 688.2,295.4 690.0,295.3 691.6,294.4 693.5,294.4 695.1,293.7 696.8,293.0" fill="none" stroke-width="1.0"/>
<polyline points="709.0,289.3 710.6,289.0 712.3,289.7 713.9,289.3 714.7,291.0 715.9,292.5 716.6,294.2 716.9,296.2 717.6,297.9 716.4,299.8 715.3,301.7 714.3,303.6 712.7,305.2 710.7,305.8 708.7,306.3 706.6,306.5" fill="none" stroke-width="1.0"/>
<polyline points="737.6,189.2 738.9,190.4 740.8,190.6 742.0,192.0 743.1,193.5 744.3,194.9 746.2,195.7 746.9,197.7 748.3,198.8 749.8,200.0 748.6,201.9 748.4,204.2 747.4,206.1 745.9,207.4 744.2,208.7 742.5,209.8 742.8,212.0 744.0,213.9 744.9,215.9 745.1,217.8 745.0,219.6 745.1,221.5 744.9,223.3 746.3,224.9 747.1,226.8 747.3,228.9 748.6,230.6 748.4,232.3 747.3,233.8 747.4,235.5 749.5,235.7 751.5,236.1 753.5,236.8 754.7,238.0 756.2,239.0 757.3,240.4 758.4,241.7 758.9,243.8 759.9,245.5 760.9,247.3 762.1,249.0 762.4,251.0 762.5,253.1 763.3,255.0 763.1,256.8 763.8,258.4 764.1,260.1 766.2,259.7 767.9,258.3 770.1,258.1 771.5,256.7 772.5,254.9 774.0,253.5 775.1,251.8 776.2,250.1 778.3,250.4 780.3,250.6 782.1,252.1 784.2,252.1 785.5,253.4 786.2,255.1 787.3,256.5 788.2,258.1 790.3,258.7 792.1,259.9 794.0,261.0 796.3,261.1 798.2,262.1 800.2,261.8 802.2,261.0 804.2,260.9 806.2,260.3 808.1,259.6 810.1,259.2 812.2,259.1 813.8,257.8 815.9,257.5 817.3,256.1 818.9,254.8 821.0,254.5 822.8,253.6 824.2,252.1 826.2,251.4 828.1,250.4 830.3,250.1 831.1,252.0 831.7,254.0 832.0,256.1 832.3,258.1 834.3,257.7 836.3,257.8 838.3,257.8 840.3,258.1 841.7,257.5 843.2,257.1 844.3,256.1" fill="none" stroke-width="1.0"/>
<polyline points="825.8,148.4 826.9,148.5 828.0,148.0 829.4,149.3 830.7,150.6 832.0,152.0 831.5,154.0 831.1,156.0 830.7,158.0 830.0,160.0 831.8,160.4 833.3,161.4 834.6,162.9 836.6,162.8 838.0,164.0 837.2,165.6 836.3,167.1 835.2,168.6 835.1,170.5 834.0,172.0 834.7,173.9 835.3,175.9 835.6,178.0 836.0,180.0 835.2,181.7 833.9,183.1 833.2,184.8 832.3,186.5 832.3,188.6 831.0,190.0 832.1,191.9 832.0,194.1 832.4,196.1 833.4,198.0 834.0,200.0 835.6,200.0 835.1,201.6 835.3,203.4 834.4,204.9 832.7,205.7 830.8,205.9 829.1,206.8 827.4,207.5 825.8,208.6 825.7,210.7 826.9,212.6 827.0,214.7 828.1,216.3 828.8,218.0 829.2,219.9 829.8,221.7 830.7,223.3 829.1,224.5 828.1,226.2 826.9,227.8 825.8,229.4 824.0,230.4 822.6,231.9 820.9,233.1 820.8,234.9 821.4,236.8 820.6,238.6 820.9,240.4 821.7,242.3 821.6,244.4 822.4,246.3 823.3,248.1 824.0,250.0 824.2,252.1" fill="none" stroke-width="1.0"/>
<polyline points="838.0,164.0 840.0,163.2 841.7,162.3 843.6,162.1 845.4,161.6 847.0,160.4 848.8,159.8 850.7,159.6 852.3,158.3 853.9,157.0 855.3,155.5 856.8,154.0 858.6,153.0 859.7,151.2 861.5,150.1 863.2,148.9 865.0,147.7 867.0,147.0 868.6,145.5 870.6,144.5 872.1,143.0 873.9,141.8 876.0,141.6" fill="none" stroke-width="1.0"/>
<polyline points="850.7,159.6 852.3,160.4 853.7,161.5 854.7,163.2 856.2,164.1 857.8,165.0 859.7,165.4 861.6,165.6 863.2,166.7" fill="none" stroke-width="1.0"/>
<polyline points="834.0,200.0 835.7,201.0 837.2,202.2 839.0,202.9 840.8,203.8 842.2,205.2 844.0,206.0 846.1,206.0 847.9,204.7 849.9,204.0 852.0,204.0 853.5,202.5 855.1,201.3 856.8,200.0" fill="none" stroke-width="1.0"/>
<polyline points="844.3,256.1 843.3,258.0 843.0,260.2 841.6,262.0 840.9,264.0 840.3,266.1 840.3,268.1 840.6,270.1 839.8,272.1 840.5,274.1 840.3,276.1 841.7,277.2 843.6,277.4 845.2,278.2 846.6,279.6 848.3,280.1 849.0,282.1 848.7,284.3 849.6,286.2" fill="none" stroke-width="1.0"/>
<polyline points="848.3,280.1 849.9,279.4 851.3,278.4 853.0,278.0 854.6,278.5 856.0,279.5" fill="none" stroke-width="1.0"/>
<polyline points="753.5,236.8 752.3,238.1 751.0,239.2 751.1,241.1 751.2,243.0 752.4,244.7 752.3,246.6 751.8,248.7 751.4,250.9 749.9,252.8 749.8,255.0 750.7,256.7 751.3,258.6 751.8,260.4 751.9,262.4 749.9,263.3 747.7,263.6 745.8,264.8 744.5,266.3 743.6,268.1 742.4,269.7 741.5,271.4 740.9,273.4 739.1,274.2 737.3,274.9 735.2,274.7 733.5,275.8 733.0,277.7 733.5,279.8 732.6,281.7 732.7,283.7 732.3,285.6 732.0,287.4 731.5,289.1 731.2,290.9 730.9,292.6 729.9,294.2 728.7,295.8 727.2,297.1 725.3,298.0 724.5,300.1 722.5,300.8 721.6,302.8 720.0,304.0 718.0,305.0 715.8,305.3 713.9,306.5" fill="none" stroke-width="1.0"/>
<polyline points="788.2,258.1 787.2,260.0 786.9,262.1 786.2,264.1 785.0,265.5 783.2,266.1 781.8,267.2 780.2,268.1 778.0,268.3 776.3,269.8 774.2,270.2 772.0,270.4 770.3,271.9 768.1,272.1 766.7,273.2 765.1,274.1 765.2,276.2 765.7,278.2 766.9,280.0 767.3,282.0 767.7,284.0 767.2,286.2 768.1,288.1 767.2,290.0 765.6,291.4 764.3,293.0 763.7,295.1 762.6,296.9 760.8,298.2 760.1,300.2 758.5,301.1 757.2,302.4 755.5,303.0 754.1,304.2 752.1,303.5 750.1,302.7 748.2,301.6 746.2,300.8 745.1,298.9 743.3,297.9 741.5,297.1 739.7,297.2 737.9,296.5 736.0,296.7 733.8,296.4 731.8,295.3 729.9,294.2" fill="none" stroke-width="1.0"/>
<polyline points="798.2,262.1 799.2,263.8 799.8,265.8 800.8,267.6 802.3,269.0 803.4,270.7 804.3,272.6 805.2,274.3 806.2,276.1 805.9,278.2 806.8,280.2 806.6,282.3" fill="none" stroke-width="1.0"/>
<polyline points="784.2,266.1 784.9,267.9 786.0,269.6 786.9,271.3 787.9,272.9 789.1,274.5 790.2,276.1 789.6,278.2 788.8,280.2 787.9,282.2 786.7,284.0 786.2,286.1 785.3,287.9 784.0,289.3 782.2,290.5 781.4,292.3 780.3,294.0 779.1,295.5 777.4,296.7 776.2,298.2 775.7,300.2 774.3,302.0 773.8,304.0 773.0,305.9 773.0,308.1 772.1,310.0" fill="none" stroke-width="1.0"/>
<polyline points="661.3,215.0 659.5,216.4 657.6,217.4 655.4,217.9 653.4,218.7 651.5,219.9 650.0,220.9 648.5,222.0 646.9,222.8 645.3,223.6 644.0,225.0 642.7,226.5 641.4,228.0 640.4,229.7 639.2,231.4 638.5,233.3 638.2,235.4 637.0,237.0 635.9,238.4 635.6,240.3 634.5,241.8 633.9,243.5 633.0,245.0 631.7,245.8 630.9,247.3 629.5,248.0 630.0,250.0 630.0,252.0 628.5,253.6 626.9,255.0 625.0,256.0 623.0,256.7 621.4,258.0 619.6,259.1 621.0,260.6 622.2,262.3 623.3,264.0 623.2,266.1 624.1,268.0 624.5,270.0 625.0,271.9 624.5,273.8 624.8,275.7 624.6,277.6 625.3,279.4" fill="none" stroke-width="1.0"/>
<polyline points="650.2,222.4 651.1,223.9 651.1,225.7 651.5,227.3 653.2,228.5 655.0,229.4 657.0,230.0 657.6,231.6 659.4,232.4 660.0,234.0 662.1,234.5 664.1,234.9 666.0,236.0 667.3,237.5 667.6,239.6 669.0,241.0 670.7,241.8 672.3,242.9 674.3,243.1 676.0,244.0 677.3,245.2 679.0,245.7 680.6,246.4 682.0,247.5 683.8,247.4 685.6,247.2 687.2,246.0 689.0,246.0 690.7,247.1 692.4,248.1 694.4,248.7 696.0,250.0 698.0,250.4 700.0,251.0" fill="none" stroke-width="1.0"/>
<polyline points="637.0,237.0 638.8,237.9 640.2,239.2 641.7,240.5 643.0,242.0 643.1,244.0 643.3,246.0 644.1,248.0 644.0,250.0 645.0,251.6 645.2,253.4 645.3,255.3 646.0,257.0 646.8,258.4 647.0,260.0 648.9,259.1 650.9,258.4 653.0,258.0 654.5,257.5 655.7,256.4 657.0,255.6 658.9,256.0 660.5,256.8 662.0,258.0 663.1,259.4 664.0,261.0 664.9,262.6 666.0,264.0 667.6,264.6 668.9,265.7 670.0,267.0 670.0,269.0 670.6,271.0 671.0,273.0 671.0,275.0 672.3,274.6" fill="none" stroke-width="1.0"/>
<polyline points="670.0,267.0 670.8,265.4 672.4,264.3 672.8,262.4 674.0,261.0 675.4,259.7 676.6,258.2 678.0,257.0 680.0,256.9 682.0,257.4 684.0,257.0 685.8,258.2 688.0,258.2 690.0,259.0 691.9,258.3 694.0,258.6 696.0,258.0 697.9,257.2 700.0,257.0 700.4,255.0" fill="none" stroke-width="1.0"/>
<polyline points="647.0,260.0 646.0,261.4 644.1,261.6 643.0,263.0 642.1,264.4 640.7,265.5 640.0,267.0 640.6,268.5 641.0,270.0 642.0,271.9 643.7,273.3 645.0,275.0 645.9,276.3 646.7,277.7 646.8,279.4" fill="none" stroke-width="1.0"/>
<polyline points="658.0,264.0 659.6,265.0 661.3,266.1 663.0,267.0 664.8,267.5 666.5,266.5 668.2,267.1 670.0,267.0" fill="none" stroke-width="1.0"/>
<polyline points="658.0,264.0 657.8,266.0 657.3,268.0 657.0,270.0 658.0,271.5 658.6,273.2 659.0,275.0 658.6,277.0 657.9,278.9 658.0,281.0 657.1,282.3 655.7,283.0 654.5,284.0" fill="none" stroke-width="1.0"/>
<polyline points="623.3,264.0 624.6,264.3 626.0,264.0 627.5,265.2 629.6,265.2 631.4,265.9 633.0,267.0 634.8,267.5 636.5,267.5 638.2,267.0 640.0,267.0" fill="none" stroke-width="1.0"/>
<polyline points="631.0,267.0 631.0,269.1 629.5,270.9 629.6,273.0 629.0,275.0 628.9,277.0 629.6,278.8" fill="none" stroke-width="1.0"/>
</g>
<path d="M921.9,78.5 L961.9,78.5 Q964.9,78.5 964.9,81.5 L964.9,84.5 L968.6,88 L964.9,91.5 L964.9,94.5 Q964.9,97.5 961.9,97.5 L921.9,97.5 Q918.9,97.5 918.9,94.5 L918.9,81.5 Q918.9,78.5 921.9,78.5 Z" fill="#1e1f2d"/>
<text x="928.7" y="91.2" font-size="8.8" fill="#ffffff" textLength="26.6" lengthAdjust="spacingAndGlyphs">Группа</text>
<path d="M985,55 C988.5,55 991,57.3 991,60 C991,62 989.6,62.3 988.3,62.3 C987,62.3 986.4,63 986.8,64.2 C987.2,65.5 986.4,67 985,67 C981.7,67 979.2,64.3 979.2,61 C979.2,57.7 981.7,55 985,55 Z" fill="#3c3d47"/>
<circle cx="982.2" cy="59.6" r="1.05" fill="#d0cfd4"/>
<circle cx="984.9" cy="57.6" r="1.05" fill="#d0cfd4"/>
<circle cx="987.8" cy="59.2" r="1.05" fill="#d0cfd4"/>
<circle cx="982.6" cy="63.3" r="1.05" fill="#d0cfd4"/>
<rect x="981.4" y="81.6" width="7.2" height="2.2" rx="0.6" fill="#5c5c63"/>
<rect x="979.3" y="84.1" width="11.4" height="8.7" rx="1.6" fill="#25262f"/>
<g fill="#3c3d47"><rect x="981.2" y="131.6" width="7.6" height="7.4" rx="1"/><circle cx="982.9" cy="131.8" r="1.3"/><circle cx="987.1" cy="131.8" r="1.3"/><circle cx="982.9" cy="138.8" r="1.3"/><circle cx="987.1" cy="138.8" r="1.3"/><rect x="979.3" y="133.6" width="11.4" height="3.4" rx="1.5"/></g>
<rect x="979.2" y="156.2" width="11.6" height="11.6" rx="2.2" fill="#2e2f35"/>
<path d="M985.8,157.4 Q989.6,157 990,160.8 Q986.4,161.6 985.8,157.4 Z" fill="#dcdcdf"/>
<text x="985" y="166.3" font-size="4.4" fill="#d0d0d4" stroke="#d0d0d4" stroke-width="0.2" text-anchor="middle">SVG</text>
<path d="M984.5,184.4 L989,184.4 L989,185.8 L988,185.8 L988,194.9 L986.4,194.9 L986.4,190.2 L984.5,190.2 Q981,190.2 981,187.3 Q981,184.4 984.5,184.4 Z" fill="#3c3d47"/>
<g stroke="#3c3d47" stroke-width="1.1" fill="none"><path d="M983.2,213.8 L980.3,216.7 L983.2,219.6"/><path d="M986.8,213.8 L989.7,216.7 L986.8,219.6"/></g>
<rect x="979.2" y="239.8" width="11.6" height="9.2" rx="1.5" fill="#3c3d47"/>
<path d="M983.8,242 L983.8,246.6 L987.4,244.3 Z" fill="#e8e8ea"/>
<rect x="979.2" y="265.8" width="11.6" height="10.8" rx="1.3" fill="#3c3d47"/>
<path d="M980.2,275.2 L983.6,271 L985.6,273 L987.6,270.6 L990,273.6 L990,275.6 L980.2,275.6 Z" fill="#e8e8ea"/><circle cx="982.3" cy="268.6" r="0.9" fill="#e8e8ea"/>
<path d="M979.8,312.9 L990.2,312.9 L986.3,318 L986.3,323.6 L983.7,322.2 L983.7,318 Z" fill="#3c3d47"/>
<path d="M984.6,342.6 L981.2,345.6 L984.6,348.6 L984.6,346.7 Q988.6,346.5 991,349.7 Q990.2,344.4 984.6,344.2 Z" fill="#3c3d47"/>
<path d="M982,342.9 L978.9,345.6 L982,348.3" stroke="#3c3d47" stroke-width="0.9" fill="none"/>
<polygon points="985.0,386.7 986.6,388.5 989.1,388.4 989.0,390.9 990.8,392.5 989.0,394.1 989.1,396.6 986.6,396.5 985.0,398.3 983.4,396.5 980.9,396.6 981.0,394.1 979.2,392.5 981.0,390.9 980.9,388.4 983.4,388.5" fill="#3c3d47" stroke="#3c3d47" stroke-width="1" stroke-linejoin="round"/>
<circle cx="985" cy="392.5" r="1.8" fill="#d0cfd4"/>
</svg></body></html>
